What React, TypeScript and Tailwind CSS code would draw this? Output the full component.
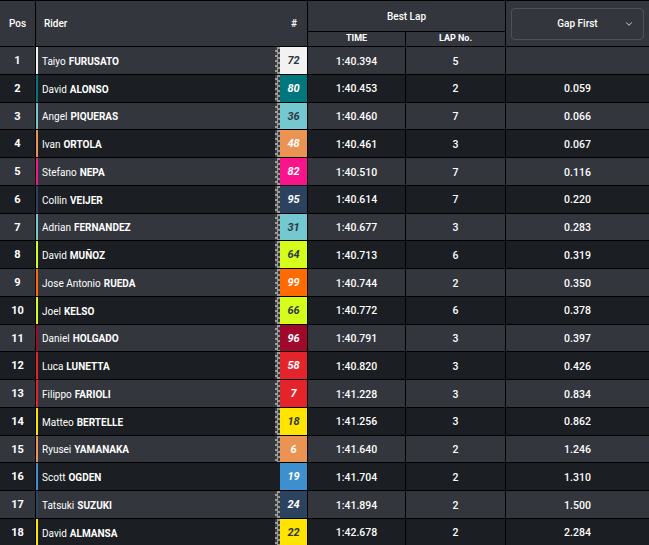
import { ChevronDown } from "lucide-react";

type Row = {
  pos: number;
  first: string;
  last: string;
  num: string;
  color: string;
  dark: boolean;
  time: string;
  lap: string;
  gap: string;
  flag: boolean;
};

const rows: Row[] = [
  { pos: 1, first: "Taiyo", last: "FURUSATO", num: "72", color: "bg-[#f2f2f2]", dark: true, time: "1:40.394", lap: "5", gap: "", flag: true },
  { pos: 2, first: "David", last: "ALONSO", num: "80", color: "bg-[#00777d]", dark: false, time: "1:40.453", lap: "2", gap: "0.059", flag: true },
  { pos: 3, first: "Angel", last: "PIQUERAS", num: "36", color: "bg-[#74c8cf]", dark: true, time: "1:40.460", lap: "7", gap: "0.066", flag: true },
  { pos: 4, first: "Ivan", last: "ORTOLA", num: "48", color: "bg-[#eb9352]", dark: false, time: "1:40.461", lap: "3", gap: "0.067", flag: true },
  { pos: 5, first: "Stefano", last: "NEPA", num: "82", color: "bg-[#fa148c]", dark: false, time: "1:40.510", lap: "7", gap: "0.116", flag: true },
  { pos: 6, first: "Collin", last: "VEIJER", num: "95", color: "bg-[#2c4360]", dark: false, time: "1:40.614", lap: "7", gap: "0.220", flag: true },
  { pos: 7, first: "Adrian", last: "FERNANDEZ", num: "31", color: "bg-[#74c8cf]", dark: true, time: "1:40.677", lap: "3", gap: "0.283", flag: true },
  { pos: 8, first: "David", last: "MUÑOZ", num: "64", color: "bg-[#d4fd1c]", dark: true, time: "1:40.713", lap: "6", gap: "0.319", flag: true },
  { pos: 9, first: "Jose Antonio", last: "RUEDA", num: "99", color: "bg-[#ff6b00]", dark: false, time: "1:40.744", lap: "2", gap: "0.350", flag: true },
  { pos: 10, first: "Joel", last: "KELSO", num: "66", color: "bg-[#d4fd1c]", dark: true, time: "1:40.772", lap: "6", gap: "0.378", flag: true },
  { pos: 11, first: "Daniel", last: "HOLGADO", num: "96", color: "bg-[#a0092b]", dark: false, time: "1:40.791", lap: "3", gap: "0.397", flag: true },
  { pos: 12, first: "Luca", last: "LUNETTA", num: "58", color: "bg-[#e4242b]", dark: false, time: "1:40.820", lap: "3", gap: "0.426", flag: true },
  { pos: 13, first: "Filippo", last: "FARIOLI", num: "7", color: "bg-[#e4242b]", dark: false, time: "1:41.228", lap: "3", gap: "0.834", flag: true },
  { pos: 14, first: "Matteo", last: "BERTELLE", num: "18", color: "bg-[#ffe400]", dark: true, time: "1:41.256", lap: "3", gap: "0.862", flag: true },
  { pos: 15, first: "Ryusei", last: "YAMANAKA", num: "6", color: "bg-[#eb9352]", dark: false, time: "1:41.640", lap: "2", gap: "1.246", flag: true },
  { pos: 16, first: "Scott", last: "OGDEN", num: "19", color: "bg-[#3d8fcd]", dark: false, time: "1:41.704", lap: "2", gap: "1.310", flag: false },
  { pos: 17, first: "Tatsuki", last: "SUZUKI", num: "24", color: "bg-[#2c4360]", dark: false, time: "1:41.894", lap: "2", gap: "1.500", flag: true },
  { pos: 18, first: "David", last: "ALMANSA", num: "22", color: "bg-[#ffe400]", dark: true, time: "1:42.678", lap: "2", gap: "2.284", flag: true },
];

export default function App() {
  return (
    <div className="h-[545px] w-[649px] overflow-hidden bg-black pt-px font-[Roboto,sans-serif] text-white">
      <div className="grid grid-cols-[35px_271px_97px_99px_143px] gap-px">
        {/* header */}
        <div className="row-span-2 flex h-[45px] items-center justify-center bg-[#33363d] text-[10px] font-medium">Pos</div>
        <div className="row-span-2 flex items-center justify-between bg-[#33363d] pl-[8px] pr-[10px] text-[10px] font-medium">
          <span>Rider</span>
          <span>#</span>
        </div>
        <div className="col-span-2 flex h-[30px] items-center justify-center bg-[#33363d] text-[10px] font-medium">Best Lap</div>
        <div className="row-span-2 flex items-center justify-center bg-[#33363d] px-[5px]">
          <div className="relative flex h-[32px] w-full items-center justify-center rounded-[4px] border border-[#4d5158] text-[10px] font-medium">
            Gap First
            <ChevronDown className="absolute right-[9px] h-[10px] w-[10px] text-[#b5b8bd]" strokeWidth={2.5} />
          </div>
        </div>
        <div className="flex h-[14px] items-center justify-center bg-[#33363d] text-[9px] font-bold">TIME</div>
        <div className="flex items-center justify-center bg-[#33363d] text-[9px] font-bold">LAP No.</div>

        {rows.map((r) => {
          const bg = r.pos % 2 === 1 ? "bg-[#33363d]" : "bg-[#1b1e22]";
          return (
            <div key={r.pos} className="contents">
              <div className={`flex h-[26.75px] items-center justify-center pt-[2px] text-[11px] font-bold ${bg}`}>{r.pos}</div>
              <div className={`flex items-stretch ${bg}`}>
                <div className={`w-[2px] ${r.color}`} />
                <div className="flex flex-1 items-center pl-[4px] pt-[2px] text-[10px]">
                  <span>{r.first}</span>
                  <span className="ml-[3px] font-bold">{r.last}</span>
                </div>
                {r.flag ? (
                  <div className="w-[5px] bg-[repeating-conic-gradient(#9b9b9b_0%_25%,#3c3c3c_0%_50%)] bg-size-[5px_5px]" />
                ) : null}
                <div
                  className={`flex w-[27px] items-center justify-center pt-[2px] text-[11px] font-bold italic ${r.color} ${
                    r.dark ? "text-[#2f3640]" : "text-white"
                  }`}
                >
                  {r.num}
                </div>
              </div>
              <div className={`flex items-center justify-center pt-[2px] text-[10.5px] font-medium ${bg}`}>{r.time}</div>
              <div className={`flex items-center justify-center pt-[2px] text-[10.5px] font-medium ${bg}`}>{r.lap}</div>
              <div className={`flex items-center justify-center pt-[2px] text-[10.5px] font-medium ${bg}`}>{r.gap}</div>
            </div>
          );
        })}
      </div>
    </div>
  );
}
